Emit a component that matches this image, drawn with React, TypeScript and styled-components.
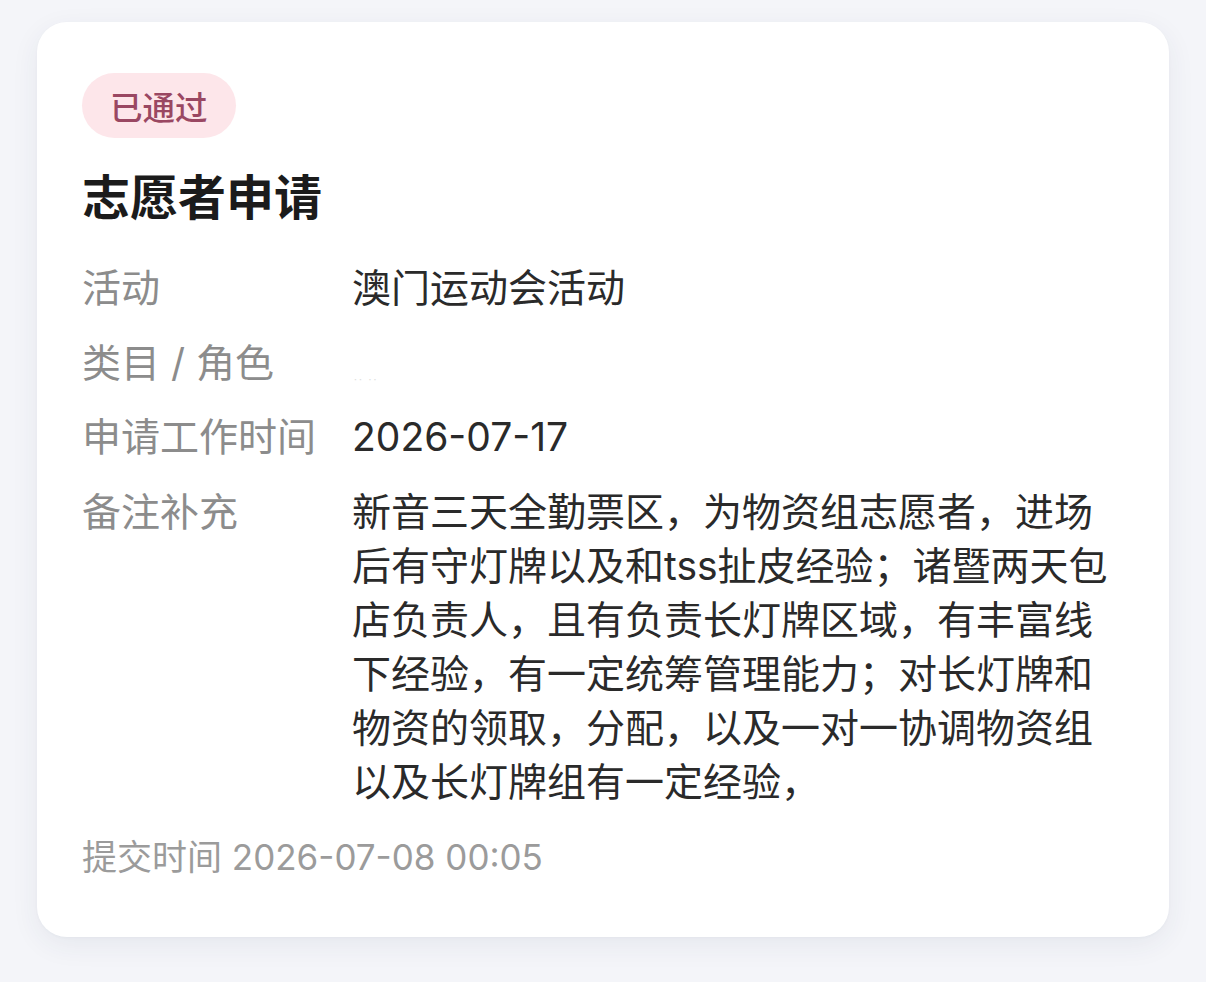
import React from "react";
import styled, { createGlobalStyle } from "styled-components";

const GlobalStyle = createGlobalStyle`
  html, body {
    margin: 0;
    padding: 0;
    background: #f4f5f9;
  }
  body {
    font-family: "Inter", "Noto Sans CJK SC", "Noto Sans", sans-serif;
    -webkit-font-smoothing: antialiased;
  }
`;

const Page = styled.div`
  min-height: 982px;
  box-sizing: border-box;
  padding: 22px 37px 45px;
  background: #f4f5f9;
`;

const Card = styled.section`
  box-sizing: border-box;
  height: 915px;
  background: #ffffff;
  border-radius: 30px;
  box-shadow: 0 8px 28px rgba(40, 50, 90, 0.07), 0 1px 3px rgba(40, 50, 90, 0.03);
  padding: 51px 45px 0;
  display: flex;
  flex-direction: column;
  align-items: flex-start;
`;

const Badge = styled.span`
  display: inline-flex;
  align-items: center;
  justify-content: center;
  height: 65px;
  padding: 0 28px;
  border-radius: 33px;
  background: #fde6ea;
  color: #9a4762;
  font-size: 32.5px;
  font-weight: 500;
  letter-spacing: 0;
`;

const Title = styled.h1`
  margin: 26px 0 0;
  font-size: 48px;
  line-height: 67px;
  font-weight: 700;
  color: #1b1b1b;
`;

const InfoList = styled.dl`
  margin: 30px 0 0;
  width: 100%;
  display: flex;
  flex-direction: column;
  gap: 20.5px;
`;

const Row = styled.div`
  display: grid;
  grid-template-columns: 270px 1fr;
  font-size: 39px;
  line-height: 54px;
  min-height: 54px;
`;

const Label = styled.dt`
  margin: 0;
  color: #8c8c8c;
`;

const Value = styled.dd`
  margin: 0;
  color: #2a2a2a;
  word-break: break-all;
`;

const Smudge = styled.dd`
  margin: 0;
  box-sizing: border-box;
  height: 54px;
  padding: 38px 0 0 2px;
  font-size: 10px;
  line-height: 1;
  letter-spacing: 2px;
  color: #dcdcdc;
  overflow: hidden;
`;

const Footer = styled.div`
  margin-top: 24px;
  font-size: 35px;
  line-height: 49px;
  color: #9b9b9b;
`;

const rows: { label: string; value: string; muted?: boolean }[] = [
  { label: "活动", value: "澳门运动会活动" },
  { label: "类目 / 角色", value: "·· ··", muted: true },
  { label: "申请工作时间", value: "2026-07-17" },
  {
    label: "备注补充",
    value:
      "新音三天全勤票区，为物资组志愿者，进场后有守灯牌以及和tss扯皮经验；诸暨两天包店负责人，且有负责长灯牌区域，有丰富线下经验，有一定统筹管理能力；对长灯牌和物资的领取，分配，以及一对一协调物资组以及长灯牌组有一定经验，",
  },
];

export default function App() {
  return (
    <>
      <GlobalStyle />
      <Page>
        <Card>
          <Badge>已通过</Badge>
          <Title>志愿者申请</Title>
          <InfoList>
            {rows.map((r) => (
              <Row key={r.label}>
                <Label>{r.label}</Label>
                {r.muted ? <Smudge>{r.value}</Smudge> : <Value>{r.value}</Value>}
              </Row>
            ))}
          </InfoList>
          <Footer>提交时间 2026-07-08 00:05</Footer>
        </Card>
      </Page>
    </>
  );
}
